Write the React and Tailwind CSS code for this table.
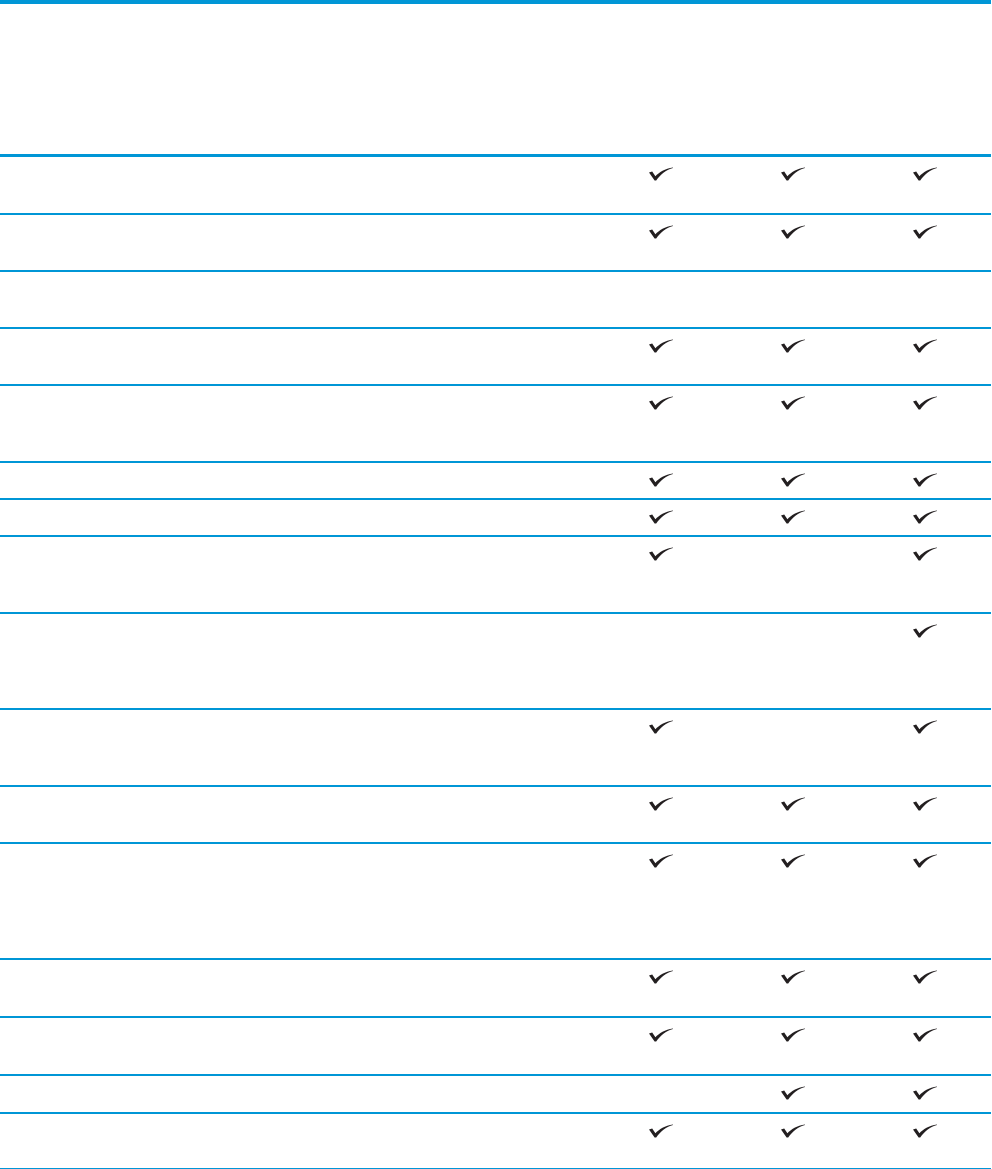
const rows = [
  { h: "h-[58px]", c: [1, 1, 1] },
  { h: "h-[57px]", c: [1, 1, 1] },
  { h: "h-[57px]", c: [0, 0, 0] },
  { h: "h-[57px]", c: [1, 1, 1] },
  { h: "h-[77px]", c: [1, 1, 1] },
  { h: "h-[37px]", c: [1, 1, 1] },
  { h: "h-[37px]", c: [1, 1, 1] },
  { h: "h-[77px]", c: [1, 0, 1] },
  { h: "h-[96px]", c: [0, 0, 1] },
  { h: "h-[77px]", c: [1, 0, 1] },
  { h: "h-[57px]", c: [1, 1, 1] },
  { h: "h-[116px]", c: [1, 1, 1] },
  { h: "h-[58px]", c: [1, 1, 1] },
  { h: "h-[58px]", c: [1, 1, 1] },
  { h: "h-[38px]", c: [0, 1, 1] },
  { h: "h-[56px]", c: [1, 1, 1] },
];

function Tick() {
  return (
    <svg width="24" height="14" viewBox="0 0 24 14" className="block">
      <path
        d="M0 5.6 L3.2 4.4 L6.4 9.2 C10 5.2 16 1.6 24 0.4 L24 1.1 C17.5 2.8 11.5 7.4 7.2 13.6 L5.6 13.6 Z"
        fill="#231f20"
      />
    </svg>
  );
}

export default function App() {
  return (
    <div className="w-[991px] bg-white font-['Liberation_Sans',sans-serif] text-sm text-[#231f20]">
      <div className="h-[154px] border-t-4 border-[#0096d6]" />
      <div className="border-t-[3px] border-[#0096d6]">
        {rows.map((r, i) => (
          <div
            key={i}
            className={`grid grid-cols-[595px_132px_132px_132px] border-b-2 border-[#0096d6] ${r.h}`}
          >
            <div />
            {r.c.map((on, j) => (
              <div key={j} className="flex justify-center pt-[10px]">
                {on ? <Tick /> : null}
              </div>
            ))}
          </div>
        ))}
      </div>
    </div>
  );
}
